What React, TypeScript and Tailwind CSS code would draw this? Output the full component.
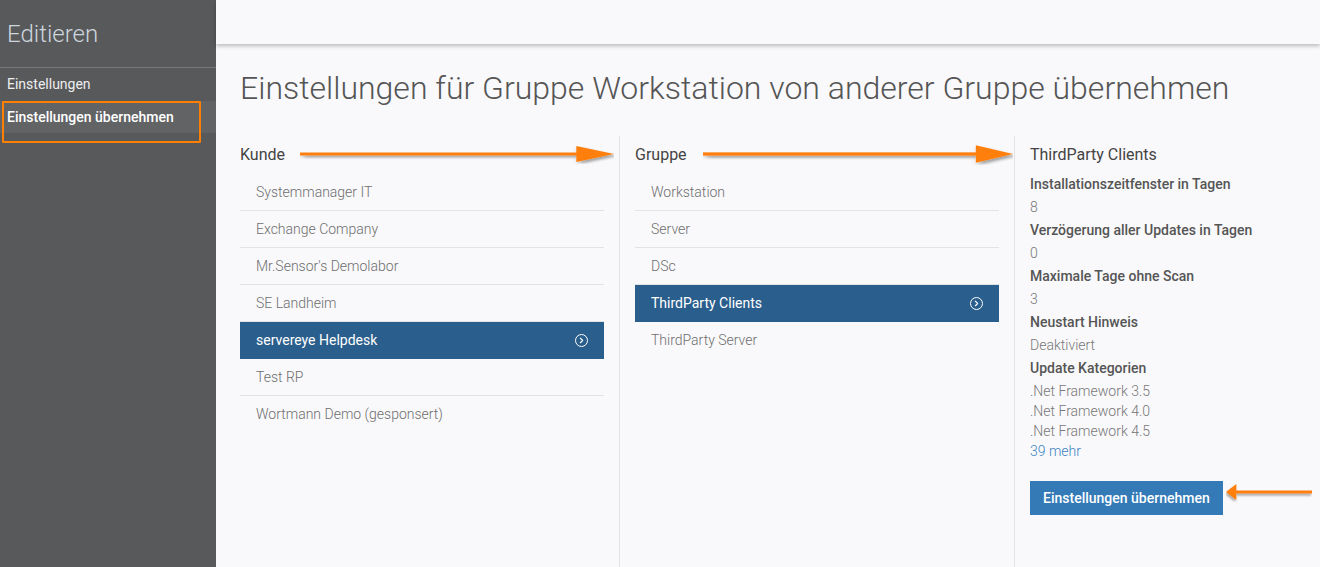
import { ChevronRight } from "lucide-react";

const kunden = [
  "Systemmanager IT",
  "Exchange Company",
  "Mr.Sensor's Demolabor",
  "SE Landheim",
  "servereye Helpdesk",
  "Test RP",
  "Wortmann Demo (gesponsert)",
];

const gruppen = ["Workstation", "Server", "DSc", "ThirdParty Clients", "ThirdParty Server"];

const settings = [
  { label: "Installationszeitfenster in Tagen", value: "8" },
  { label: "Verzögerung aller Updates in Tagen", value: "0" },
  { label: "Maximale Tage ohne Scan", value: "3" },
  { label: "Neustart Hinweis", value: "Deaktiviert" },
];

function CircleChevron() {
  return (
    <span className="inline-flex items-center justify-center w-[13px] h-[13px] rounded-full border-[1.5px] border-white">
      <ChevronRight size={9} strokeWidth={3} className="text-white" />
    </span>
  );
}

function ListRow({ name, active }: { name: string; active?: boolean }) {
  return (
    <div
      className={`h-[37px] flex items-center justify-between pl-4 pr-4 border-b last:border-b-0 ${
        active ? "bg-[#2a5e8c] text-white border-[#2a5e8c]" : "text-[#6e6e6e] font-light border-[#e3e3e6]"
      }`}
    >
      <span className="text-[14px]">{name}</span>
      {active && <CircleChevron />}
    </div>
  );
}

function Arrow({ className, flip }: { className: string; flip?: boolean }) {
  return (
    <svg className={className} viewBox="0 0 100 20" preserveAspectRatio="none" style={flip ? { transform: "scaleX(-1)" } : undefined}>
      <defs>
        <filter id="sh" x="-5%" y="-50%" width="110%" height="200%">
          <feDropShadow dx="1" dy="2" stdDeviation="1" floodColor="#000" floodOpacity="0.35" />
        </filter>
      </defs>
      <g filter="url(#sh)">
        <rect x="0" y="8.5" width="90" height="3" fill="#ff7f0e" />
        <polygon points="88,2 100,10 88,18" fill="#ff7f0e" />
      </g>
    </svg>
  );
}

export default function App() {
  return (
    <div className="flex w-[1320px] h-[567px] overflow-hidden font-['Roboto',sans-serif]">
      <aside className="w-[216px] shrink-0 bg-[#58595b] flex flex-col relative">
        <div className="h-[68px] flex items-center px-[7px] border-b border-[#77787a]">
          <span className="text-[24px] font-light text-[#cdd6de] leading-none">Editieren</span>
        </div>
        <div className="h-[33px] flex items-center px-[7px] text-[14px] text-[#eeeeee]">Einstellungen</div>
        <div className="h-[32px] flex items-center px-[7px] text-[14px] font-medium text-white bg-[#626365]">
          Einstellungen übernehmen
        </div>
        <div className="absolute left-[2px] top-[101px] w-[199px] h-[42px] border-2 border-[#ff8000] rounded-[1px]" />
      </aside>

      <main className="flex-1 bg-[#f9f9fb] flex flex-col relative">
        <div className="h-[44px] shrink-0 bg-[#f9f9fb] shadow-[0_2px_4px_rgba(0,0,0,0.25)] z-10" />
        <h1 className="pl-6 pt-[28px] text-[32px] font-light text-[#555] leading-none">
          Einstellungen für Gruppe Workstation von anderer Gruppe übernehmen
        </h1>

        <div className="flex flex-1 mt-[32px] pl-6">
          <section className="w-[380px] pr-[15px] border-r border-[#e3e3e6]">
            <h2 className="text-[16px] text-[#444] h-[38px] flex items-center">Kunde</h2>
            {kunden.map((k) => (
              <ListRow key={k} name={k} active={k === "servereye Helpdesk"} />
            ))}
          </section>

          <section className="w-[395px] px-[15px] border-r border-[#e3e3e6]">
            <h2 className="text-[16px] text-[#444] h-[38px] flex items-center">Gruppe</h2>
            {gruppen.map((g) => (
              <ListRow key={g} name={g} active={g === "ThirdParty Clients"} />
            ))}
          </section>

          <section className="flex-1 px-[15px]">
            <h2 className="text-[16px] text-[#444] h-[38px] flex items-center">ThirdParty Clients</h2>
            <dl className="text-[14px] leading-[23px] mt-[-1px]">
              {settings.map((s) => (
                <div key={s.label}>
                  <dt className="font-medium text-[#555]">{s.label}</dt>
                  <dd className="font-light text-[#777]">{s.value}</dd>
                </div>
              ))}
              <dt className="font-medium text-[#555]">Update Kategorien</dt>
              <dd className="font-light text-[#777] leading-[20px] mt-[1px]">
                <div>.Net Framework 3.5</div>
                <div>.Net Framework 4.0</div>
                <div>.Net Framework 4.5</div>
                <div className="text-[#3a84c4]">39 mehr</div>
              </dd>
            </dl>
            <button className="mt-[20px] h-[34px] px-[13px] bg-[#337ab7] text-white text-[14px] font-medium">
              Einstellungen übernehmen
            </button>
          </section>
        </div>

        <Arrow className="absolute left-[84px] top-[144px] w-[314px] h-[20px]" />
        <Arrow className="absolute left-[487px] top-[143px] w-[310px] h-[22px]" />
        <Arrow className="absolute left-[1010px] top-[482px] w-[86px] h-[20px]" flip />
      </main>
    </div>
  );
}
